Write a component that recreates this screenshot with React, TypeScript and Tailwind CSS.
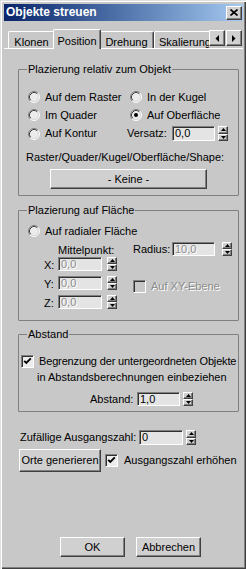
const raised =
  'border border-t-white border-l-white border-r-[#404040] border-b-[#404040] shadow-[inset_-1px_-1px_0_#808080] bg-[#d0d0d0]'
const sunken =
  'border border-t-[#808080] border-l-[#808080] border-r-white border-b-white shadow-[inset_1px_1px_0_#303030]'
const group = 'border border-[#808080] rounded-[1px] min-w-0'
const dim = 'text-[#8c8c8c] [text-shadow:1px_1px_0_#ffffff]'

function Radio({ checked }: { checked?: boolean }) {
  return (
    <svg width="12" height="12" viewBox="0 0 12 12" className="shrink-0">
      <circle cx="6" cy="6" r="5" fill="#ececec" />
      <path d="M2.11 9.89A5.5 5.5 0 0 1 9.89 2.11" fill="none" stroke="#808080" />
      <path d="M9.89 2.11A5.5 5.5 0 0 1 2.11 9.89" fill="none" stroke="#ffffff" />
      <path d="M2.82 9.18A4.5 4.5 0 0 1 9.18 2.82" fill="none" stroke="#404040" />
      <path d="M9.18 2.82A4.5 4.5 0 0 1 2.82 9.18" fill="none" stroke="#d8d8d8" />
      {checked && <circle cx="6" cy="6" r="2" fill="#000" />}
    </svg>
  )
}

function Check({ checked, disabled }: { checked?: boolean; disabled?: boolean }) {
  return (
    <div className={`w-[13px] h-[13px] shrink-0 ${sunken} ${disabled ? 'bg-[#c8c8c8]' : 'bg-[#ececec]'} flex items-center justify-center`}>
      {checked && (
        <svg width="9" height="9" viewBox="0 0 9 9">
          <path d="M1.2 3.8L3.3 6l4.5-4.6" fill="none" stroke="#000" strokeWidth="1.9" />
        </svg>
      )}
    </div>
  )
}

function Spinner({ className = 'h-[14px]' }: { className?: string }) {
  return (
    <div className={`w-[10px] flex flex-col shrink-0 ${className}`}>
      <div className={`flex-1 ${raised} flex items-center justify-center`}>
        <svg width="5" height="3" viewBox="0 0 5 3"><path d="M0 3h5L2.5 0z" fill="#000" /></svg>
      </div>
      <div className={`flex-1 ${raised} flex items-center justify-center`}>
        <svg width="5" height="3" viewBox="0 0 5 3"><path d="M0 0h5L2.5 3z" fill="#000" /></svg>
      </div>
    </div>
  )
}

function Field({ value, w, disabled, h = 'h-[14px]' }: { value: string; w: string; disabled?: boolean; h?: string }) {
  return (
    <div className={`${w} ${h} ${sunken} bg-[#e4e4e4] flex items-center pl-[2px] shrink-0 ${disabled ? dim : ''}`}>
      {value}
    </div>
  )
}

function Opt({ label, checked }: { label: string; checked?: boolean }) {
  return (
    <div className="flex items-center gap-[5px] whitespace-nowrap">
      <Radio checked={checked} />
      <span>{label}</span>
    </div>
  )
}

function Tab({ label, w, selected }: { label: string; w: string; selected?: boolean }) {
  return (
    <div
      className={`${w} shrink-0 flex justify-center whitespace-nowrap border-t border-l border-r border-t-white border-l-white border-r-[#404040] rounded-t-[2px] shadow-[inset_-1px_0_0_#808080] ${
        selected ? 'h-[21px] -mb-px -mx-[2px] relative z-10 bg-[#c8c8c8] pt-[5px]' : 'h-[18px] pt-[4px]'
      }`}
    >
      {label}
    </div>
  )
}

export default function App() {
  return (
    <div className="w-[246px] h-[569px] bg-[#c8c8c8] flex flex-col pt-[4px] pl-[4px] pr-[3px] text-[11px] leading-[13px] text-black font-['Liberation_Sans',Arial,sans-serif] shadow-[inset_1px_1px_0_#e0e0e0,inset_2px_2px_0_#ffffff,inset_-1px_-1px_0_#404040,inset_-2px_-2px_0_#808080] overflow-hidden">
      {/* Title bar */}
      <div className="h-[17px] flex items-center justify-between bg-linear-to-r from-[#0a246a] to-[#a6caf0] pl-[2px] pr-[1px]">
        <span className="text-white font-bold text-[12px]">Objekte streuen</span>
        <div className={`w-[16px] h-[14px] ${raised} flex items-center justify-center`}>
          <svg width="8" height="7" viewBox="0 0 8 7">
            <path d="M0.5 0.5L7.5 6.5M7.5 0.5L0.5 6.5" stroke="#000" strokeWidth="1.6" />
          </svg>
        </div>
      </div>

      {/* Tabs */}
      <div className="mt-[7px] h-[20px] flex items-end ml-[4px]">
        <div className="flex items-end w-[201px] h-[21px] overflow-hidden self-start">
          <div className="flex items-end h-[21px]">
            <Tab label="Klonen" w="w-[47px]" />
            <Tab label="Position" w="w-[48px]" selected />
            <Tab label="Drehung" w="w-[55px]" />
            <Tab label="Skalierung" w="w-[62px]" />
          </div>
        </div>
        <div className="flex gap-[1px] self-start mt-[2px]">
          <div className={`w-[16px] h-[16px] ${raised} flex items-center justify-center`}>
            <svg width="4" height="7" viewBox="0 0 4 7"><path d="M4 0v7L0.5 3.5z" fill="#000" /></svg>
          </div>
          <div className={`w-[16px] h-[16px] ${raised} flex items-center justify-center`}>
            <svg width="4" height="7" viewBox="0 0 4 7"><path d="M0 0v7l3.5-3.5z" fill="#000" /></svg>
          </div>
        </div>
      </div>
      <div className="h-px bg-white" />

      <div className="ml-[14px] w-[221px] flex flex-col whitespace-nowrap">
        {/* Plazierung relativ zum Objekt */}
        <fieldset className={`${group} mt-[14px] pl-[9px] pr-[6px] pt-[12px] pb-[6px]`}>
          <legend className="px-[1px] -ml-[1px]">Plazierung relativ zum Objekt</legend>
          <div className="grid grid-cols-[102px_1fr]">
            <div className="h-[18px] flex items-center"><Opt label="Auf dem Raster" /></div>
            <div className="h-[18px] flex items-center"><Opt label="In der Kugel" /></div>
            <div className="h-[18px] flex items-center"><Opt label="Im Quader" /></div>
            <div className="h-[18px] flex items-center"><Opt label="Auf Oberfläche" checked /></div>
            <div className="h-[19px] flex items-center"><Opt label="Auf Kontur" /></div>
            <div className="h-[19px] flex items-center -ml-[3px]">
              <span className="w-[45px]">Versatz:</span>
              <Field value="0,0" w="w-[43px]" h="h-[15px]" />
              <div className="ml-[3px]"><Spinner className="h-[15px]" /></div>
            </div>
          </div>
          <div className="mt-[8px] -ml-[2px]">Raster/Quader/Kugel/Oberfläche/Shape:</div>
          <div className={`mt-[5px] ml-[22px] w-[157px] h-[20px] ${raised} flex items-center justify-center`}>- Keine -</div>
        </fieldset>

        {/* Plazierung auf Fläche */}
        <fieldset className={`${group} mt-[8px] pl-[9px] pr-[6px] pt-[5px] pb-[11px]`}>
          <legend className="px-[1px] -ml-[1px]">Plazierung auf Fläche</legend>
          <div className="h-[18px] flex items-center"><Opt label="Auf radialer Fläche" /></div>
          <div className="mt-[2px] flex">
            <div className="w-[105px] flex flex-col">
              <div className="mt-[2px] pl-[30px]">Mittelpunkt:</div>
              <div className="flex flex-col gap-[5px]">
                {['X:', 'Y:', 'Z:'].map(l => (
                  <div key={l} className="h-[14px] flex items-center">
                    <span className="w-[30px] pl-[16px] pt-[3px]">{l}</span>
                    <Field value="0,0" w="w-[44px]" disabled />
                    <div className="ml-[5px]"><Spinner /></div>
                  </div>
                ))}
              </div>
            </div>
            <div className="flex flex-col">
              <div className="h-[14px] flex items-center">
                <span className="w-[39px]">Radius:</span>
                <Field value="10,0" w="w-[43px]" disabled />
                <div className="ml-[7px]"><Spinner /></div>
              </div>
              <div className="mt-[24px] h-[13px] flex items-center gap-[5px]">
                <Check disabled />
                <span className={dim}>Auf XY-Ebene</span>
              </div>
            </div>
          </div>
        </fieldset>

        {/* Abstand */}
        <fieldset className={`${group} mt-[7px] pl-[2px] pr-0 pt-[12px] pb-[5px]`}>
          <legend className="px-[1px] ml-[6px]">Abstand</legend>
          <div className="h-[16px] flex items-center gap-[5px]">
            <Check checked />
            <span className="tracking-[-0.15px]">Begrenzung der untergeordneten Objekte</span>
          </div>
          <div className="h-[16px] flex items-center pl-[16px]">in Abstandsberechnungen einbeziehen</div>
          <div className="mt-[7px] h-[14px] flex items-center pl-[69px]">
            <span className="w-[47px]">Abstand:</span>
            <Field value="1,0" w="w-[43px]" />
            <div className="ml-[3px]"><Spinner /></div>
          </div>
        </fieldset>

        {/* Seed */}
        <div className="mt-[18px] h-[15px] flex items-center ml-[2px]">
          <span className="w-[119px]">Zufällige Ausgangszahl:</span>
          <Field value="0" w="w-[44px]" h="h-[15px]" />
          <div className="ml-[3px]"><Spinner className="h-[15px]" /></div>
        </div>
        <div className="mt-[4px] flex items-center ml-[1px]">
          <div className={`w-[82px] h-[23px] ${raised} flex items-center justify-center`}>Orte generieren</div>
          <div className="ml-[4px]"><Check checked /></div>
          <span className="ml-[6px]">Ausgangszahl erhöhen</span>
        </div>

        {/* Buttons */}
        <div className="mt-[65px] flex gap-[11px] ml-[42px]">
          <div className={`w-[65px] h-[20px] ${raised} flex items-center justify-center`}>OK</div>
          <div className={`w-[65px] h-[20px] ${raised} flex items-center justify-center`}>Abbrechen</div>
        </div>
      </div>
    </div>
  )
}
